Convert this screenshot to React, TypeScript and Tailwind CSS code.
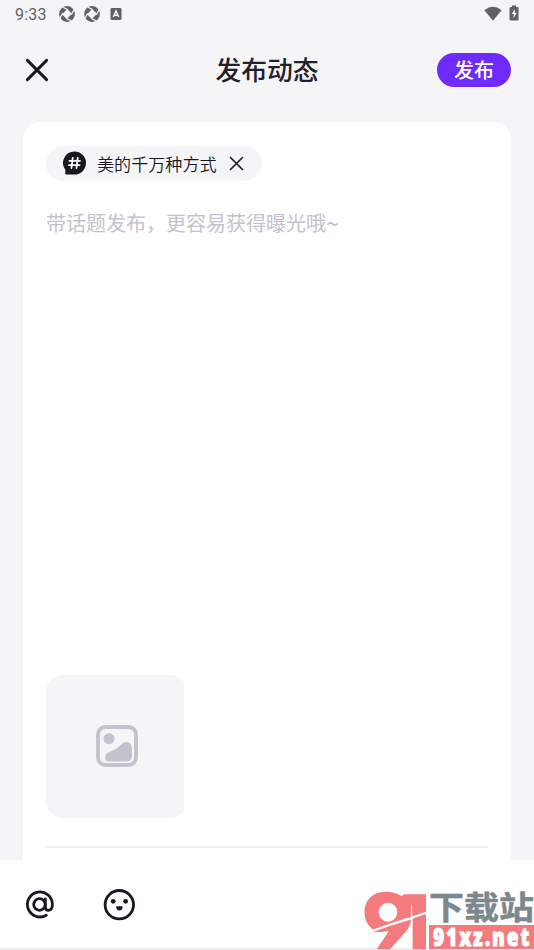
import type { ReactNode } from "react";

const cjk = "font-['Noto_Sans_CJK_SC',sans-serif]";

function Aperture() {
  return (
    <svg width="16" height="16" viewBox="0 0 16 16">
      <circle cx="8" cy="8" r="7.9" fill="#616163" />
      <path d="M8.3 3 13 7.7 7.7 13 3 8.3Z" fill="#f5f5f8" />
      <path d="M8.6 3.6 4 1.2M12.4 8.6 14.8 4M7.4 12.4 12 14.8M3.6 7.4 1.2 12" stroke="#f5f5f8" strokeWidth="1.2" />
    </svg>
  );
}

function StatusBar() {
  return (
    <div className="flex h-7 items-center justify-between px-[15px] text-[#616163]">
      <div className="flex items-center">
        <span className="w-[44px] pt-px font-['Roboto',sans-serif] text-[16px] leading-7 tracking-[0.2px]">9:33</span>
        <div className="flex items-center gap-[9px]">
          <Aperture />
          <Aperture />
        </div>
        <svg className="ml-[10px]" width="12" height="12" viewBox="0 0 12 12">
          <rect x="0.5" width="11" height="12" rx="1.2" fill="#616163" />
          <path d="M3.3 9 6 3 8.7 9M4.3 7.2h3.4" fill="none" stroke="#f5f5f8" strokeWidth="1.5" />
        </svg>
      </div>
      <div className="flex items-center gap-[7px] pb-[2px]">
        <svg width="18" height="15" viewBox="0 0 18 15">
          <path d="M0.4 4.2Q9-2.7 17.6 4.2L9 14.7Z" fill="#616163" />
        </svg>
        <svg width="10" height="16" viewBox="0 0 10 16">
          <path d="M3 0.5h4V2h1.5q1 0 1 1v11.5q0 1-1 1h-7q-1 0-1-1V3q0-1 1-1H3Z" fill="#616163" />
          <path d="M5.8 4 2.7 9h2v4l3-5.2h-2Z" fill="#f5f5f8" />
        </svg>
      </div>
    </div>
  );
}

function Cross({ size, weight }: { size: number; weight: number }) {
  return (
    <svg width={size} height={size} viewBox="0 0 24 24" fill="none" stroke="#181722" strokeWidth={weight} strokeLinecap="round">
      <path d="M2.4 2.4 21.6 21.6M21.6 2.4 2.4 21.6" />
    </svg>
  );
}

function Header() {
  return (
    <header className="grid h-[94px] grid-cols-[1fr_auto_1fr] items-start px-[23px]">
      <button className="mt-[30px] ml-[2px] w-6" aria-label="关闭">
        <Cross size={24} weight={2.9} />
      </button>
      <h1 className={`${cjk} mt-[22px] text-[25.8px] leading-[38px] font-medium text-[#22212b]`}>发布动态</h1>
      <button className={`${cjk} mt-[25px] flex h-[34px] w-[74px] justify-center justify-self-end rounded-full bg-[#6e2bfd] text-[20px] leading-[34px] font-medium text-white`}>发布</button>
    </header>
  );
}

function Topic() {
  return (
    <div className="flex h-[35px] w-[216px] items-center rounded-full bg-[#f5f5f8] pl-[17px]">
      <svg className="mb-[2px]" width="23" height="24" viewBox="0 0 23 24">
        <path d="M11.5 0.5A11.5 11.5 0 1 1 11.5 23.5H2.3V18.8A11.5 11.5 0 0 1 11.5.5Z" fill="#181722" />
        <path d="M9.7 6.8 8.5 17M14.7 6.8 13.5 17M6.4 9.8H17M6 14.1H16.6" stroke="white" strokeWidth="1.8" strokeLinecap="round" />
      </svg>
      <span className={`${cjk} ml-[11px] w-[120px] text-[17.1px] leading-[35px] font-[350] whitespace-nowrap text-[#181722]`}>美的千万种方式</span>
      <button className="ml-[12px]" aria-label="移除话题">
        <Cross size={15} weight={2.6} />
      </button>
    </div>
  );
}

function PictureIcon() {
  return (
    <svg width="42" height="42" viewBox="0 0 42 42" fill="#c4c2cc">
      <rect x="2" y="2" width="38" height="38" rx="7.5" fill="none" stroke="#c4c2cc" strokeWidth="3.8" />
      <circle cx="13" cy="13.7" r="5.5" />
      <path d="M9 32.2q0-3.6 3.7-5l6.5-3q2.6-1 4.8-3.7 3-3.5 6-3.5 6 0 6 7.2V31q0 5.4-5.2 5.4H13Q9 36.2 9 32.2Z" />
    </svg>
  );
}

function ToolButton({ label, children }: { label: string; children: ReactNode }) {
  return <button aria-label={label}>{children}</button>;
}

function SiteMark() {
  return (
    <div className="flex h-[60px] w-[171px]">
      <svg className="shrink-0" width="66" height="60" viewBox="0 0 66 60" fill="#f37b7e">
        <path fillRule="evenodd" d="M22 1.7C29 1.5 34 3.2 38.5 6L41 4.2H63V21.7L39 29.5 10 39.5C4 35 1.5 29 1.5 21.5 1.5 10 10 2 22 1.7ZM25 12.7A9.3 9.5 0 1 0 25 31.7 9.3 9.5 0 1 0 25 12.7Z" />
        <path d="M10.5 41.8Q25 36 40 32L48 29.4Q47.5 36 42.5 42L27 59.3H13.7L26 41Q18 42.5 10.5 41.8Z" />
        <path d="M49.6 28.6 63 24V59.3H49.6Z" />
        <path d="M48.6 15.5V30" stroke="white" strokeWidth="1.1" />
      </svg>
      <div className="flex w-[105px] flex-col">
        <div className={`${cjk} h-[35px] origin-top scale-y-[0.92] text-[35px] leading-[33px] font-bold whitespace-nowrap text-[#7c878e] [-webkit-text-stroke:0.5px_#7c878e]`}>下载站</div>
        <div className="h-[24px] bg-[#f37b7e] pl-[4px] text-white">
          <span className="block w-[124px] origin-left scale-x-[0.8] font-['Open_Sans',sans-serif] text-[24px] leading-[24px] font-extrabold tracking-[2.3px] whitespace-nowrap [-webkit-text-stroke:1px_white]">91xz.net</span>
        </div>
      </div>
    </div>
  );
}

export default function App() {
  return (
    <div className="flex h-[950px] w-[534px] flex-col overflow-hidden bg-[#f5f5f8]">
      <StatusBar />
      <Header />
      <main className="mx-[23px] flex h-[738px] flex-col rounded-t-[17px] bg-white px-[23px] pt-[24px]">
        <Topic />
        <p className={`${cjk} mt-[27px] h-[30px] text-[20px] leading-[30px] text-[#c4c2cc]`}>
          带话题发布，更容易获得曝光哦<span className="relative top-[2px] text-[24px] leading-none">~</span>
        </p>
        <div className="mt-[437px] h-[143px] w-[138px] overflow-hidden">
          <div className="flex h-[143px] w-[141px] items-center justify-center rounded-[17px] bg-[#f5f5f8] pb-[1px]">
            <PictureIcon />
          </div>
        </div>
        <div className="mt-[28px] h-[2px] bg-[#f0f0f2]" />
      </main>
      <footer className="flex h-[90px] items-start justify-between border-b-2 border-[#ececee] bg-white">
        <div className="flex items-center gap-[48px] pt-[28px] pl-[25px]">
          <ToolButton label="提及">
            <svg width="30" height="34" viewBox="0 0 30 34" fill="none" stroke="#181722" strokeWidth="2.8" strokeLinecap="round">
              <circle cx="14.5" cy="16.5" r="5.8" />
              <path d="M20.3 11V19Q20.3 22.3 23.5 22.3 27.4 22 27.4 16.5A12.5 12.5 0 1 0 21.3 27.2" />
            </svg>
          </ToolButton>
          <ToolButton label="表情">
            <svg width="32" height="34" viewBox="0 0 32 34">
              <circle cx="16.3" cy="16.7" r="14.2" fill="none" stroke="#181722" strokeWidth="2.8" />
              <circle cx="10.2" cy="13.3" r="2.4" fill="#181722" />
              <circle cx="22.6" cy="13.3" r="2.4" fill="#181722" />
              <path d="M13.6 18.2h5.6q.6 0 .5.7-.5 3.5-3.3 3.5t-3.3-3.5q-.1-.7.5-.7Z" fill="#181722" />
            </svg>
          </ToolButton>
        </div>
        <div className="mt-[30px]">
          <SiteMark />
        </div>
      </footer>
    </div>
  );
}
